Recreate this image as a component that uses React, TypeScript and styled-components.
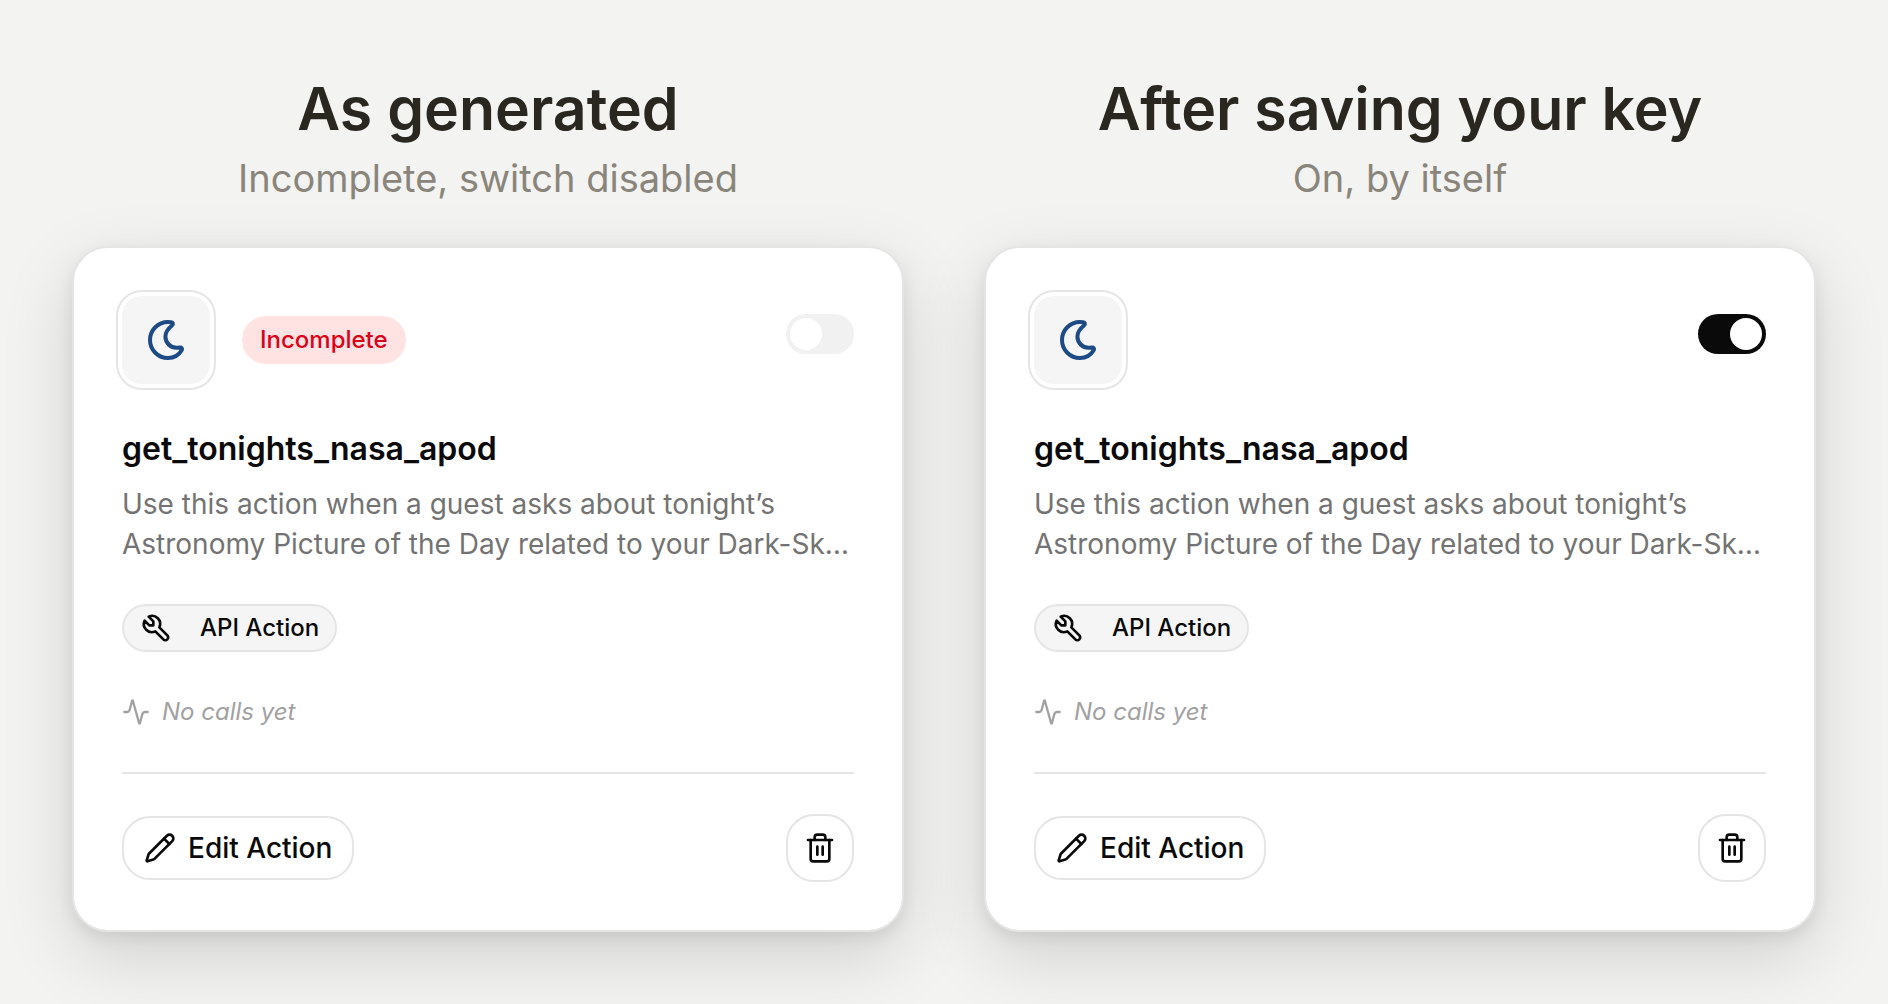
import React, { useId, useState } from 'react';
import styled, { createGlobalStyle } from 'styled-components';
import { Activity, Pencil, Trash2 } from 'lucide-react';

const GlobalStyle = createGlobalStyle`
  *, *::before, *::after { box-sizing: border-box; }
  html { background: #f3f3f1; }
  body {
    margin: 0;
    background: #f3f3f1;
    color: #0a0a0a;
    font-family: Inter, "Liberation Sans", sans-serif;
    -webkit-font-smoothing: antialiased;
  }
  h1, h2, p { margin: 0; }
`;

const Page = styled.main`
  display: grid;
  grid-template-columns: repeat(2, minmax(0, 1fr));
  gap: 80px;
  padding: 72px;
`;

const Column = styled.section`
  display: flex;
  flex-direction: column;
  gap: 44px;
`;

const Heading = styled.header`
  display: flex;
  flex-direction: column;
  gap: 8px;
  text-align: center;
`;

const Title = styled.h1`
  font-size: 59px;
  line-height: 74px;
  font-weight: 600;
  color: #292720;
`;

const Subtitle = styled.p`
  font-size: 38px;
  line-height: 48px;
  color: #8a857b;
`;

const Card = styled.article`
  display: flex;
  flex-direction: column;
  gap: 40px;
  padding: 48px;
  border: 2px solid #e5e5e5;
  border-radius: 36px;
  background: #fff;
  box-shadow: 0 6px 16px rgba(0, 0, 0, 0.08), 0 24px 72px rgba(0, 0, 0, 0.14);
`;

const CardTop = styled.div`
  display: flex;
  align-items: center;
  gap: 32px;
`;

const IconTile = styled.div`
  display: grid;
  place-items: center;
  width: 88px;
  height: 88px;
  border-radius: 20px;
  background: #f5f5f5;
  color: #1c4b85;
  box-shadow: 0 0 0 4px #fff, 0 0 0 6px #e5e5e5;
`;

const StatusBadge = styled.span`
  padding: 8px 18px;
  border-radius: 24px;
  background: #ffe2e2;
  color: #d9041a;
  font-size: 24px;
  line-height: 32px;
  font-weight: 500;
`;

const Switch = styled.input`
  appearance: none;
  display: flex;
  width: 68px;
  height: 40px;
  margin: 0 0 12px auto;
  padding: 4px;
  border-radius: 20px;
  background: #0a0a0a;
  cursor: pointer;

  &::before {
    content: '';
    width: 32px;
    height: 32px;
    border-radius: 50%;
    background: #fff;
  }
  &:checked { justify-content: flex-end; }
  &:not(:checked) { background: #e5e5e5; }
  &:disabled { background: #f1f1f1; cursor: not-allowed; }
`;

const Texts = styled.div`
  display: flex;
  flex-direction: column;
  gap: 10px;
`;

const Name = styled.h2`
  font-size: 32px;
  line-height: 50px;
  font-weight: 600;
`;

const Description = styled.p`
  font-size: 28px;
  line-height: 40px;
  color: #737373;
`;

const TypeTag = styled.span`
  display: inline-flex;
  align-self: flex-start;
  align-items: center;
  gap: 28px;
  padding: 6px 16px;
  border: 2px solid #e5e5e5;
  border-radius: 24px;
  background: #f5f5f5;
  font-size: 24px;
  line-height: 32px;
  font-weight: 500;
`;

const Calls = styled.p`
  display: flex;
  align-items: center;
  gap: 12px;
  font-size: 24px;
  line-height: 40px;
  font-style: italic;
  color: #a1a1a1;
`;

const CardFooter = styled.footer`
  display: flex;
  align-items: center;
  justify-content: space-between;
  padding-top: 40px;
  border-top: 2px solid #e5e5e5;
`;

const Button = styled.button<{ $square?: boolean }>`
  display: inline-flex;
  align-items: center;
  justify-content: center;
  gap: 12px;
  width: ${({ $square }) => ($square ? '68px' : 'auto')};
  height: ${({ $square }) => ($square ? '68px' : '64px')};
  padding: ${({ $square }) => ($square ? '0' : '0 20px')};
  border: 2px solid #e5e5e5;
  border-radius: 28px;
  background: #fff;
  color: #0a0a0a;
  font: 500 28px/40px Inter, "Liberation Sans", sans-serif;
  cursor: pointer;
`;

const MoonIcon = () => (
  <svg width="48" height="48" viewBox="0 0 24 24" fill="none" stroke="currentColor" strokeWidth="2" strokeLinecap="round" strokeLinejoin="round" aria-hidden="true">
    <path d="M13 3C13.5 3 14.1 3.05 14.6 3.1C15.5 3.2 15.7 4 15.1 4.6C13 6.3 11.7 8 11.7 10.3C11.7 13.4 14.2 15.9 17.3 15.9C17.9 15.9 18.4 15.85 18.9 15.75C19.8 15.6 20.3 16.3 19.9 17C18.5 19.4 16 21 13 21A9 9 0 0 1 13 3Z" />
  </svg>
);

const ToolIcon = () => (
  <svg width="32" height="32" viewBox="0 0 24 24" fill="none" stroke="currentColor" strokeWidth="2" strokeLinecap="round" strokeLinejoin="round" aria-hidden="true">
    <path d="M7 10h3v-3l-3.5-3.5a6 6 0 0 1 8 8l6 6a2 2 0 0 1-3 3l-6-6a6 6 0 0 1-8-8l3.5 3.5" />
  </svg>
);

interface ActionPanelProps {
  title: string;
  subtitle: string;
  incomplete?: boolean;
}

function ActionPanel({ title, subtitle, incomplete = false }: ActionPanelProps) {
  const [enabled, setEnabled] = useState(!incomplete);
  const nameId = useId();
  return (
    <Column>
      <Heading>
        <Title>{title}</Title>
        <Subtitle>{subtitle}</Subtitle>
      </Heading>
      <Card>
        <CardTop>
          <IconTile><MoonIcon /></IconTile>
          {incomplete && <StatusBadge>Incomplete</StatusBadge>}
          <Switch
            type="checkbox"
            role="switch"
            aria-labelledby={nameId}
            checked={enabled}
            disabled={incomplete}
            onChange={(event) => setEnabled(event.target.checked)}
          />
        </CardTop>
        <Texts>
          <Name id={nameId}>get_tonights_nasa_apod</Name>
          <Description>
            Use this action when a guest asks about tonight’s Astronomy Picture of the Day related to your Dark-Sk…
          </Description>
        </Texts>
        <TypeTag><ToolIcon />API Action</TypeTag>
        <Calls><Activity size={28} aria-hidden="true" />No calls yet</Calls>
        <CardFooter>
          <Button type="button"><Pencil size={32} aria-hidden="true" />Edit Action</Button>
          <Button type="button" $square aria-label="Delete action"><Trash2 size={32} aria-hidden="true" /></Button>
        </CardFooter>
      </Card>
    </Column>
  );
}

export default function App() {
  return (
    <>
      <GlobalStyle />
      <Page>
        <ActionPanel title="As generated" subtitle="Incomplete, switch disabled" incomplete />
        <ActionPanel title="After saving your key" subtitle="On, by itself" />
      </Page>
    </>
  );
}
